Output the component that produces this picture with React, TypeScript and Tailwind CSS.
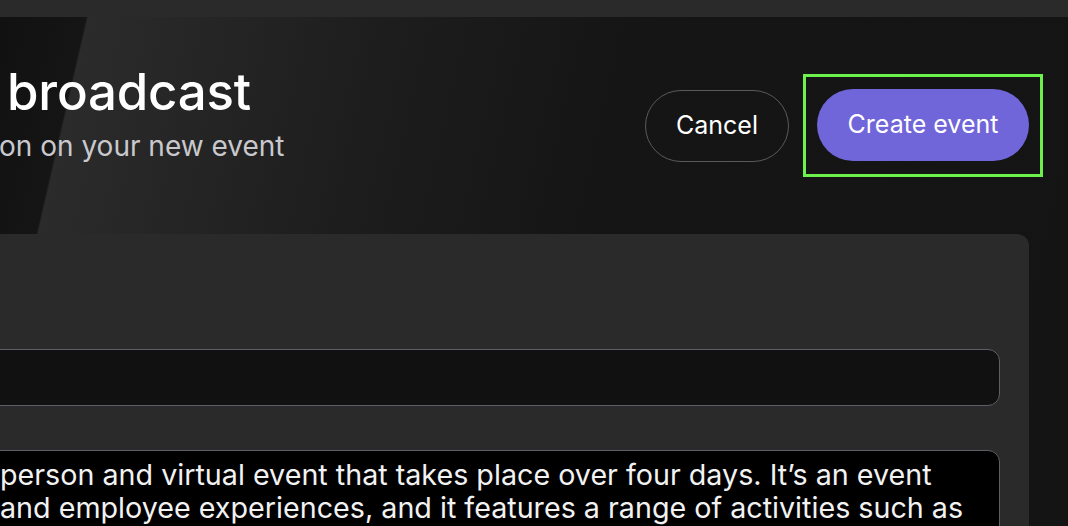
import React from "react";

export default function App() {
  return (
    <div className="w-[1068px] h-[526px] overflow-hidden flex flex-col bg-[#141414] font-['Inter','Noto_Sans',sans-serif] text-white">
      <div className="h-[17px] shrink-0 bg-[#2a2a2a]" />
      <div className="flex-1 flex flex-col bg-[linear-gradient(103deg,#111111_0px,#151515_84px,#2b2b2b_86px,#1d1d1d_380px,#151515_620px,#141414_100%)]">
        <div className="flex items-start justify-between shrink-0">
          <div className="mt-[49px] pl-[7px]">
            <h1 className="text-[51px] leading-[51px] font-medium tracking-[-0.2px]">broadcast</h1>
            <p className="mt-[15px] -ml-[8px] text-[28px] leading-[28px] text-[#c9c9cd]">on on your new event</p>
          </div>
          <div className="mt-[57px] mr-[25px] flex items-center gap-[14px]">
            <button className="h-[72px] w-[144px] rounded-full border border-[#5a5a5a] text-[25px] text-white">Cancel</button>
            <div className="border-[3px] border-[#6df14c] pl-[11px] pr-[11px] pt-[12px] pb-[13px]">
              <button className="h-[72px] w-[212px] rounded-full bg-[#7065d9] text-[25px] text-white">Create event</button>
            </div>
          </div>
        </div>
        <div className="mt-[57px] -ml-[40px] mr-[39px] flex-1 rounded-[12px] bg-[#2a2a2a] pl-[40px] pr-[29px] pt-[115px]">
          <div className="h-[57px] -ml-[60px] rounded-[12px] border border-[#5f5e66] bg-[#111111]" />
          <div className="mt-[44px] -ml-[60px] h-[120px] rounded-[12px] border border-[#5f5e66] bg-black pl-[59px] pt-[7px] text-[28.7px] leading-[33px] text-[#f2f2f2]">
            <div className="whitespace-nowrap">person and virtual event that takes place over four days. It’s an event</div>
            <div className="whitespace-nowrap">and employee experiences, and it features a range of activities such as</div>
          </div>
        </div>
      </div>
    </div>
  );
}
